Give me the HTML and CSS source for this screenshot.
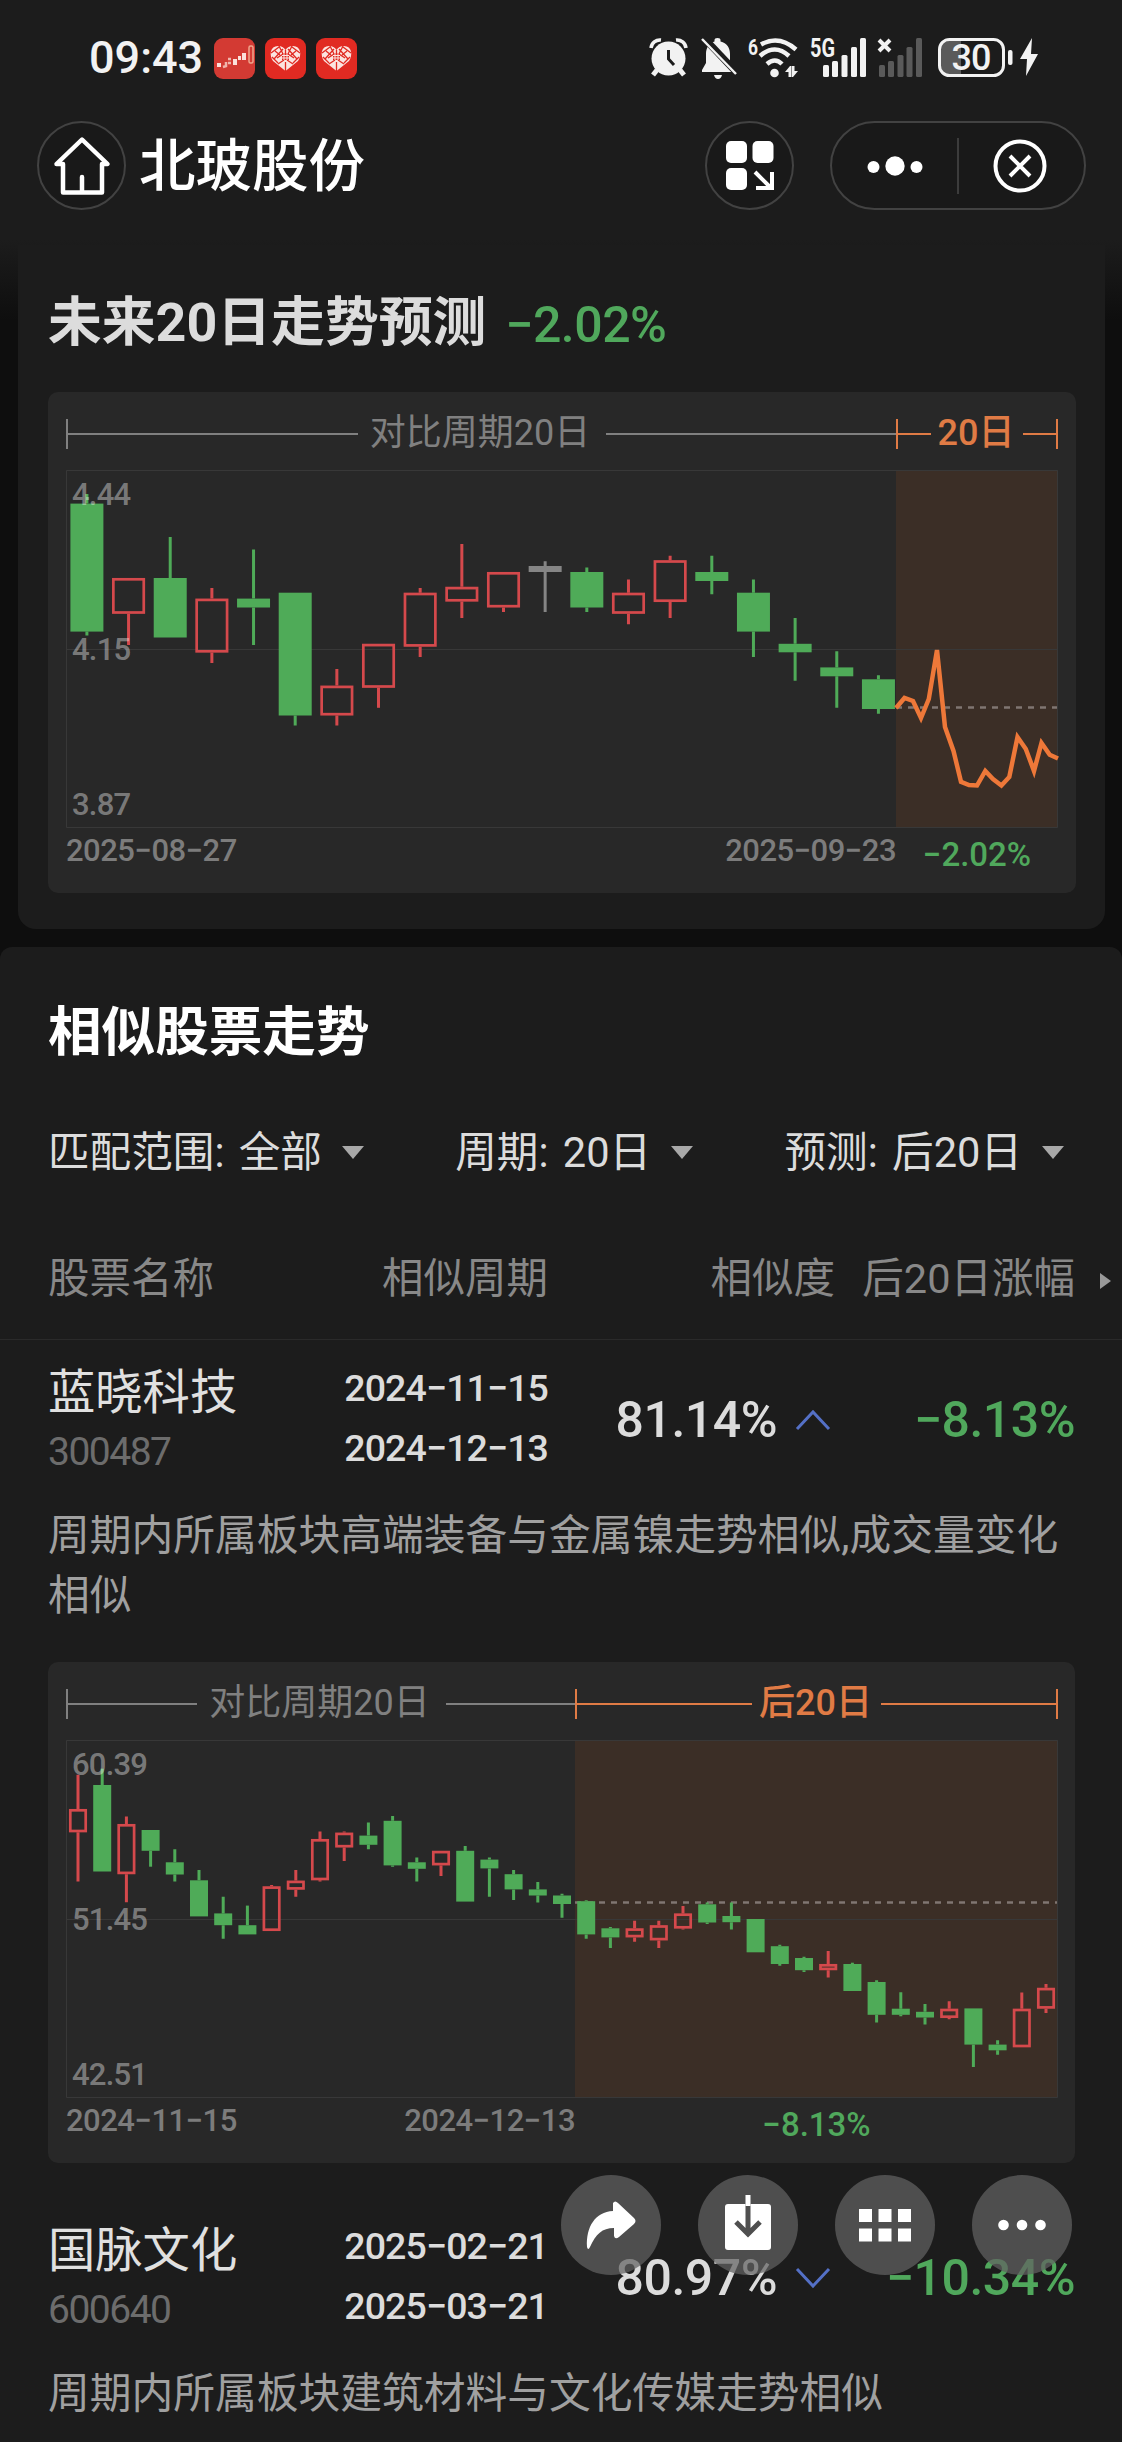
FILE: index.html
```html
<!DOCTYPE html>
<html lang="zh-CN">
<head>
    <meta charset="UTF-8">
    <meta name="viewport" content="width=device-width, initial-scale=1.0">
    <title>北玻股份</title>
    <link rel="stylesheet" href="styles.css">
</head>
<body>
    <div class="status-bar">
        <div class="status-left">
            <span class="time">09:43</span>
            <svg class="app-icon" viewBox="0 0 41 41">
                <rect width="41" height="41" rx="9" fill="#d33a33"/>
                <path d="M3 27h4M9 29l3-1v-4M14 21h3M14 25h3" stroke="#f0b5ac" stroke-width="2.500" fill="none"/>
                <path d="M3 25h4v4H3zM19 21h4v6h-4zM24 18h3v4h-3zM28 15h4v7h-4z" fill="#fbe0da"/>
                <rect x="35" y="8" width="4" height="17" rx="1.500" fill="none" stroke="#f0a58c" stroke-width="1.500"/>
            </svg>
            <svg class="app-icon" viewBox="0 0 41 41">
                <rect width="41" height="41" rx="9" fill="#e12a22"/>
                <path d="M20.500 33L8 23C4 17 5 8 13 8q5 0 7.500 4Q23 8 28 8c8 0 9 9 5 15z" fill="#fbe4e0"/>
                <path d="M6 15l8-6M9 21l9-10M7 19l6 6M14 8l4 8-6 4M20.500 12v5M35 15l-8-6M32 21l-9-10M34 19l-6 6M27 8l-4 8 6 4M13 26l6-4M28 26l-6-4M20.500 24v9M10 13l5 4M31 13l-5 4" stroke="#e12a22" stroke-width="1.300" fill="none"/>
                <rect x="17" y="15" width="7" height="7" fill="#e12a22"/>
                <path d="M19 15v7M22 15v7M17 17.500h7M17 20h7" stroke="#fbe4e0" stroke-width="1"/>
            </svg>
            <svg class="app-icon" viewBox="0 0 41 41">
                <rect width="41" height="41" rx="9" fill="#e12a22"/>
                <path d="M20.500 33L8 23C4 17 5 8 13 8q5 0 7.500 4Q23 8 28 8c8 0 9 9 5 15z" fill="#fbe4e0"/>
                <path d="M6 15l8-6M9 21l9-10M7 19l6 6M14 8l4 8-6 4M20.500 12v5M35 15l-8-6M32 21l-9-10M34 19l-6 6M27 8l-4 8 6 4M13 26l6-4M28 26l-6-4M20.500 24v9M10 13l5 4M31 13l-5 4" stroke="#e12a22" stroke-width="1.300" fill="none"/>
                <rect x="17" y="15" width="7" height="7" fill="#e12a22"/>
                <path d="M19 15v7M22 15v7M17 17.500h7M17 20h7" stroke="#fbe4e0" stroke-width="1"/>
            </svg>
        </div>
        <div class="status-right">
            <!-- alarm -->
            <svg width="37" height="40" viewBox="0 0 37 40">
                <path d="M1 10a9 9 0 0 1 10-8M36 10a9 9 0 0 0-10-8" stroke="#f2f2f2" stroke-width="3.500" fill="none"/>
                <path d="M7 32l-4 5M30 32l4 5" stroke="#f2f2f2" stroke-width="5"/>
                <circle cx="18.500" cy="20.500" r="17" fill="#f2f2f2"/>
                <path d="M18.500 12v9l5.500 6" stroke="#1c1c1c" stroke-width="3" fill="none"/>
            </svg>
            <!-- bell off -->
            <svg class="bell" width="36" height="42" viewBox="0 0 36 42">
                <path d="M13.500 4.500V3q0-2 3-2t3 2v1.500C26 6 29 11 29 17v9l4 7v2H1v-2l4-7v-9C5 11 8 6 13.500 4.500z" fill="#f2f2f2"/>
                <path d="M13 38h8q-1 4-4 4t-4-4z" fill="#f2f2f2"/>
                <path d="M2 0l35 37" stroke="#1c1c1c" stroke-width="7"/>
                <path d="M1 2l34 35" stroke="#f2f2f2" stroke-width="2.500"/>
            </svg>
            <!-- wifi -->
            <svg class="wifi" width="50" height="42" viewBox="0 0 50 42">
                <text x="0" y="18" class="status-text-small" textLength="10" lengthAdjust="spacingAndGlyphs">6</text>
                <path d="M13 7.500q18-10 35 5" stroke="#f2f2f2" stroke-width="4.500" fill="none"/>
                <path d="M12 19q15-13 29 0" stroke="#f2f2f2" stroke-width="4.500" fill="none"/>
                <path d="M19 27q8-7 15 0" stroke="#f2f2f2" stroke-width="4.500" fill="none"/>
                <circle cx="26.500" cy="36" r="4.300" fill="#f2f2f2"/>
                <path d="M37 35l5-6h1.500v11h-3v-5zM50 34l-5 6h-1v-11h2.500v5z" fill="#f2f2f2"/>
            </svg>
            <!-- 5G -->
            <svg width="56" height="42" viewBox="0 0 56 42">
                <text x="0" y="20" class="status-text" textLength="25" lengthAdjust="spacingAndGlyphs">5G</text>
                <g fill="#f2f2f2">
                    <rect x="13" y="28" width="6" height="12" rx="1.500"/>
                    <rect x="22" y="24" width="6" height="16" rx="1.500"/>
                    <rect x="31.500" y="18" width="6" height="22" rx="1.500"/>
                    <rect x="41" y="10" width="6" height="30" rx="1.500"/>
                    <rect x="50" y="1" width="6" height="39" rx="1.500"/>
                </g>
            </svg>
            <!-- second sim, no service -->
            <svg width="45" height="42" viewBox="0 0 45 42">
                <path d="M1 3l11 11M12 3L1 14" stroke="#f2f2f2" stroke-width="4"/>
                <g fill="#5a5a5a">
                    <rect x="1" y="28" width="6" height="12" rx="1.500"/>
                    <rect x="10" y="24" width="6" height="16" rx="1.500"/>
                    <rect x="19.500" y="18" width="6" height="22" rx="1.500"/>
                    <rect x="28.500" y="10" width="6" height="30" rx="1.500"/>
                    <rect x="38" y="1" width="6" height="39" rx="1.500"/>
                </g>
            </svg>
            <!-- battery -->
            <svg class="battery" width="75" height="42" viewBox="0 0 75 42">
                <path d="M11 4h12v33H11q-8 0-8-8V12q0-8 8-8z" fill="#5a5a5a"/>
                <rect x="1.500" y="2.500" width="64" height="36" rx="10" fill="none" stroke="#f2f2f2" stroke-width="3"/>
                <rect x="70" y="13" width="4.500" height="15" rx="2" fill="#f2f2f2"/>
                <text x="33" y="33" class="battery-text" text-anchor="middle">30</text>
            </svg>
            <svg width="18" height="42" viewBox="0 0 18 42">
                <path d="M12 1L0 22h7l-1 17L18 17h-7z" fill="#f2f2f2"/>
            </svg>
        </div>
    </div>

    <div class="nav-bar">
        <div class="round-btn">
            <svg width="56" height="60" viewBox="0 0 56 60" fill="none" stroke="#fff" stroke-width="4.500" stroke-linejoin="round" stroke-linecap="round">
                <path d="M8 28H2.500L28 3.500 53.500 28H48v28.500H9V28M28 56V41"/>
            </svg>
        </div>
        <h1>北玻股份</h1>
        <div class="round-btn grid-btn">
            <svg width="50" height="50" viewBox="0 0 50 50" fill="#fff">
                <rect x="1" y="0" width="21" height="22" rx="5"/>
                <rect x="27.500" y="0" width="21" height="22" rx="5"/>
                <rect x="1" y="27" width="21" height="22" rx="5"/>
                <path d="M30 31l16 16M47 31v16H31" fill="none" stroke="#fff" stroke-width="4"/>
            </svg>
        </div>
        <div class="capsule">
            <svg width="56" height="22" viewBox="0 0 56 22" fill="#fff">
                <circle cx="6.500" cy="12" r="6"/>
                <circle cx="28" cy="11" r="9.700"/>
                <circle cx="49.500" cy="12" r="6"/>
            </svg>
            <span class="capsule-line"></span>
            <svg width="54" height="54" viewBox="0 0 54 54" fill="none" stroke="#fff" stroke-width="4">
                <circle cx="27" cy="27" r="24.500"/>
                <path d="M17 17l20 20M37 17L17 37"/>
            </svg>
        </div>
    </div>

    <div class="forecast">
        <div class="forecast-card">
            <div class="forecast-title">
                <h2>未来20日走势预测</h2>
                <span class="percent down">−2.02%</span>
            </div>
            <div class="chart first" id="forecastChart">
                <div class="chart-head">
                    <div class="period"><i class="tick"></i><i class="rule"></i><span>对比周期20日</span><i class="rule"></i></div>
                    <div class="period after"><i class="tick"></i><i class="rule"></i><span>20日</span><i class="rule"></i><i class="tick"></i></div>
                </div>
                <svg class="plot" width="992" height="357" viewBox="0 0 992 357"></svg>
                <div class="chart-foot">
                    <div class="dates"><span>2025−08−27</span><span>2025−09−23</span></div>
                    <div class="result down">−2.02%</div>
                </div>
            </div>
        </div>
    </div>

    <div class="similar">
        <h2>相似股票走势</h2>
        <div class="filters">
            <div class="filter">匹配范围: 全部<i class="caret"></i></div>
            <div class="filter">周期: 20日<i class="caret"></i></div>
            <div class="filter">预测: 后20日<i class="caret"></i></div>
        </div>
        <div class="table-head">
            <span>股票名称</span>
            <span>相似周期</span>
            <span>相似度</span>
            <span>后20日涨幅</span>
            <i class="more-arrow"></i>
        </div>

        <div class="stock">
            <div class="stock-row">
                <div class="stock-name"><b>蓝晓科技</b><small>300487</small></div>
                <div class="stock-dates">2024−11−15<br>2024−12−13</div>
                <div class="match">
                    <span class="percent">81.14%</span>
                    <svg width="36" height="22" viewBox="0 0 36 22"><path d="M2 20L18 3l16 17" fill="none" stroke="#5470c6" stroke-width="3"/></svg>
                </div>
                <div class="percent down">−8.13%</div>
            </div>
            <p class="desc">周期内所属板块高端装备与金属镍走势相似,成交量变化相似</p>
            <div class="chart second" id="similarChart">
                <div class="chart-head">
                    <div class="period"><i class="tick"></i><i class="rule"></i><span>对比周期20日</span><i class="rule"></i></div>
                    <div class="period after"><i class="tick"></i><i class="rule"></i><span>后20日</span><i class="rule"></i><i class="tick"></i></div>
                </div>
                <svg class="plot" width="992" height="357" viewBox="0 0 992 357"></svg>
                <div class="chart-foot">
                    <div class="dates"><span>2024−11−15</span><span>2024−12−13</span></div>
                    <div class="result down">−8.13%</div>
                </div>
            </div>
        </div>

        <div class="stock">
            <div class="stock-row">
                <div class="stock-name"><b>国脉文化</b><small>600640</small></div>
                <div class="stock-dates">2025−02−21<br>2025−03−21</div>
                <div class="match">
                    <span class="percent">80.97%</span>
                    <svg width="36" height="22" viewBox="0 0 36 22"><path d="M2 2l16 17L34 2" fill="none" stroke="#5470c6" stroke-width="3"/></svg>
                </div>
                <div class="percent down">−10.34%</div>
            </div>
            <p class="desc">周期内所属板块建筑材料与文化传媒走势相似</p>
        </div>
    </div>

    <div class="float-actions">
        <div class="float-btn">
            <svg width="50" height="50" viewBox="0 0 50 50"><path d="M27 3q2-3 5 0l16 15q3 3 0 6L33 37q-4 3-5-1v-8C16 28 10 34 4 47q-2 4-3 0C0 27 9 12 27 11z" fill="#fff"/></svg>
        </div>
        <div class="float-btn">
            <svg class="save-icon" width="46" height="56" viewBox="0 0 46 56">
                <rect x="0" y="9" width="46" height="46" rx="3" fill="#fff"/>
                <path d="M23 9v30M11 27l12 12 12-12" fill="none" stroke="#4f4f4f" stroke-width="5"/>
                <rect x="20.500" y="0" width="5" height="11" fill="#fff"/>
            </svg>
        </div>
        <div class="float-btn">
            <svg width="52" height="33" viewBox="0 0 52 33" fill="#fff">
                <rect x="0" y="0" width="13" height="13"/><rect x="19.500" y="0" width="13" height="13"/><rect x="39" y="0" width="13" height="13"/>
                <rect x="0" y="19.500" width="13" height="13"/><rect x="19.500" y="19.500" width="13" height="13"/><rect x="39" y="19.500" width="13" height="13"/>
            </svg>
        </div>
        <div class="float-btn">
            <svg width="48" height="12" viewBox="0 0 48 12" fill="#fff"><circle cx="5.500" cy="6" r="5.300"/><circle cx="24" cy="6" r="5.300"/><circle cx="42.500" cy="6" r="5.300"/></svg>
        </div>
    </div>

    <script src="script.js"></script>
</body>
</html>
```
FILE: styles.css
```css
* {
    margin: 0;
    padding: 0;
    box-sizing: border-box;
}

body {
    width: 1122px;
    height: 2442px;
    overflow: hidden;
    background-color: #0e0e0e;
    color: #dcdcdc;
    font-family: Roboto, 'Noto Sans CJK SC', sans-serif;
}

svg {
    display: block;
    flex-shrink: 0;
    overflow: visible;
}

i {
    display: block;
    flex-shrink: 0;
}

.down {
    color: #50a85c;
}

/* status bar */
.status-bar {
    height: 116px;
    padding: 0 84px 0 89px;
    display: flex;
    align-items: center;
    justify-content: space-between;
    background-color: #1c1c1c;
}

.status-left {
    display: flex;
    align-items: center;
    gap: 10px;
}

.time {
    width: 115px;
    font-size: 45px;
    font-weight: 500;
    line-height: 50px;
    color: #f2f2f2;
}

.app-icon {
    width: 41px;
    height: 41px;
}

.status-right {
    display: flex;
    align-items: center;
    gap: 12px;
}

.bell {
    margin-left: 2px;
}

.wifi {
    margin-left: -1px;
}

.battery {
    margin-left: 3px;
    margin-right: -5px;
}

.status-text {
    font-size: 26px;
    font-weight: 700;
    fill: #f2f2f2;
}

.status-text-small {
    font-size: 22px;
    font-weight: 700;
    fill: #f2f2f2;
}

.battery-text {
    font-size: 36px;
    font-weight: 500;
    letter-spacing: -1px;
    fill: #f2f2f2;
}

/* nav */
.nav-bar {
    height: 99px;
    padding: 0 36px 0 37px;
    display: flex;
    align-items: center;
    background-color: #1c1c1c;
}

.round-btn {
    width: 89px;
    height: 89px;
    border: 2px solid #424242;
    border-radius: 50%;
    background-color: #191919;
    display: flex;
    align-items: center;
    justify-content: center;
}

.nav-bar h1 {
    margin-left: 13px;
    padding-top: 3px;
    font-size: 56.500px;
    font-weight: 500;
    line-height: 80px;
    color: #fff;
}

.grid-btn {
    margin-left: auto;
}

.capsule {
    width: 256px;
    height: 89px;
    margin-left: 36px;
    padding: 0 37px 0 35px;
    border: 2px solid #424242;
    border-radius: 45px;
    background-color: #191919;
    display: flex;
    align-items: center;
    justify-content: space-between;
}

.capsule-line {
    width: 2px;
    height: 56px;
    background-color: #3c3c3c;
}

/* forecast */
.forecast {
    padding: 30px 17px 18px 18px;
    background: linear-gradient(#1c1c1c 25px, #0e0e0e 105px);
}

.forecast-card {
    padding: 36px 29px 36px 30px;
    background-color: #1c1c1c;
    border-radius: 0 0 18px 18px;
}

.forecast-title {
    height: 80px;
    margin-bottom: 31px;
    display: flex;
    align-items: center;
}

.forecast-title h2 {
    padding-top: 4px;
    font-size: 53.800px;
    font-weight: 700;
    line-height: 76px;
}

.forecast-title .percent {
    margin-left: 19px;
    padding-top: 7px;
}

.percent {
    font-size: 50px;
    font-weight: 500;
    line-height: 60px;
    letter-spacing: -0.5px;
}

/* chart card */
.chart {
    height: 501px;
    padding: 0 17px 0 18px;
    border-radius: 10px;
    background-color: #282828;
}

.chart-head,
.chart-foot {
    display: grid;
}

.first .chart-head,
.first .chart-foot {
    grid-template-columns: 830px 162px;
}

.second .chart-head,
.second .chart-foot {
    grid-template-columns: 509px 483px;
}

.chart-head {
    height: 78px;
    padding-top: 5px;
}

.period {
    display: flex;
    align-items: center;
    font-size: 36px;
    line-height: 50px;
    color: #808080;
}

.period span {
    padding: 0 16px 2px 12px;
}

.tick {
    width: 2px;
    height: 30px;
    background-color: currentColor;
}

.rule {
    flex: 1;
    height: 2px;
    background-color: currentColor;
}

.after {
    color: #e07b45;
    font-weight: 500;
}

.after span {
    padding: 0 9px 2px 7px;
}

.axis-label {
    font-size: 31px;
    font-weight: 500;
    letter-spacing: -0.8px;
    fill: rgba(255, 255, 255, 0.4);
}

.grid-line {
    stroke: #383838;
    stroke-width: 1;
    fill: none;
}

.base-line {
    stroke: #807672;
    stroke-width: 2.5;
    stroke-dasharray: 6 6;
}

.dates {
    display: flex;
    justify-content: space-between;
    padding-top: 4px;
    font-size: 31px;
    font-weight: 500;
    line-height: 40px;
    letter-spacing: -0.5px;
    color: #7c7c7c;
}

.result {
    padding-top: 7px;
    text-align: center;
    font-size: 33px;
    font-weight: 500;
    line-height: 42px;
}

/* similar stocks */
.similar {
    height: 1495px;
    padding: 53px 47px 0 48px;
    background-color: #1c1c1c;
    border-radius: 12px 12px 0 0;
    overflow: hidden;
}

.similar h2 {
    padding-top: 3px;
    font-size: 53.600px;
    font-weight: 700;
    line-height: 60px;
    color: #fff;
}

.filters {
    margin-top: 60px;
    padding-right: 11px;
    display: flex;
    justify-content: space-between;
}

.filter {
    display: flex;
    align-items: center;
    font-size: 41.600px;
    line-height: 60px;
    word-spacing: 4px;
}

.caret {
    margin-left: 20px;
    margin-bottom: 2px;
    border: 11px solid transparent;
    border-top: 13px solid #a8a8a8;
    border-bottom: 0;
}

.table-head {
    position: relative;
    height: 91px;
    margin: 66px -47px 0 -48px;
    padding-left: 48px;
    display: grid;
    grid-template-columns: 250px 250px 287px 240px;
    font-size: 41.500px;
    line-height: 60px;
    color: #888;
    border-bottom: 1px solid #2a2a2a;
}

.table-head span + span {
    text-align: right;
}

.more-arrow {
    position: absolute;
    right: 11px;
    top: 24px;
    border: 8.500px solid transparent;
    border-left: 11px solid #999;
    border-right: 0;
}

.stock {
    height: 858px;
}

.stock:last-child {
    height: auto;
}

.stock-row {
    height: 160px;
    display: grid;
    grid-template-columns: 250px 250px 287px 240px;
    align-items: center;
}

.stock-name b {
    display: block;
    padding-top: 1px;
    font-size: 47.300px;
    font-weight: 400;
    line-height: 62px;
    color: #e0e0e0;
}

.stock-name small {
    display: block;
    font-size: 39px;
    font-weight: 400;
    line-height: 56px;
    letter-spacing: -1.500px;
    color: #6c6c6c;
}

.stock-dates {
    text-align: right;
    font-size: 37.500px;
    font-weight: 500;
    line-height: 60px;
    letter-spacing: -0.900px;
    padding-bottom: 5px;
}

.match {
    display: flex;
    align-items: center;
    justify-content: flex-end;
    gap: 18px;
    padding-right: 4px;
}

.stock-row > .percent {
    text-align: right;
}

.desc {
    padding-top: 2px;
    margin-top: 4px;
    margin-bottom: 36px;
    font-size: 41.750px;
    line-height: 60px;
    color: #a0a0a0;
}

/* floating actions */
.float-actions {
    position: absolute;
    left: 561px;
    top: 2175px;
    display: flex;
    gap: 37px;
}

.float-btn {
    width: 100px;
    height: 100px;
    border-radius: 50%;
    background-color: rgba(98, 98, 98, 0.725);
    display: flex;
    align-items: center;
    justify-content: center;
}

.save-icon {
    margin-bottom: 4px;
}
```
FILE: script.js
```js
const COLORS = { G: '#4fab58', R: '#d5494c', X: '#858585' };

// [type, high, bodyTop, bodyBottom, low]
const forecastCandles = [
    ['G', 24, 33.6, 161.6, 165.6], ['R', 108, 108, 143.8, 175], ['G', 67, 108, 167.5, 167.5],
    ['R', 118, 128.6, 182.6, 193], ['G', 79.4, 128.6, 137.5, 175], ['G', 122.7, 122.7, 245.5, 255.5],
    ['R', 199, 215.6, 245.5, 255.5], ['R', 173.8, 173.8, 217.8, 237.8], ['R', 118, 122.7, 176.7, 187],
    ['R', 74, 116.8, 131.6, 148], ['R', 102, 102, 137.5, 142], ['X', 91.3, 96, 102, 142],
    ['G', 97.6, 102, 137.5, 142], ['R', 109.4, 122.7, 143.8, 154.2], ['R', 85.7, 90.2, 132, 148],
    ['G', 85.7, 102, 111, 124.2], ['G', 109.4, 122.7, 161.6, 187], ['G', 148, 173.8, 182.3, 210.8],
    ['G', 181.2, 197.4, 206.3, 237.8], ['G', 205.2, 209.3, 239, 243.7]
];

const forecastLine = [
    [830, 238], [838.5, 228], [847, 231], [855, 248], [862.8, 229], [871, 180], [879, 257],
    [887.5, 281], [895, 311.8], [903, 315], [911, 315.5], [919.3, 301], [927, 309], [935.4, 315.5],
    [943.3, 307], [951.5, 267], [959.8, 279], [968, 301], [975.5, 273], [983.7, 284.8], [992, 288.5]
];

const similarCandles = [
    ['R', 34.8, 69, 92.3, 141.6], ['G', 28.7, 45, 131.5, 131.5], ['R', 76.4, 84, 134.2, 162.2],
    ['G', 90, 90, 110.8, 126.7], ['G', 109.2, 122.3, 134.5, 141.6], ['G', 130, 140.3, 176.4, 176.4],
    ['G', 156.8, 173.4, 185.2, 198.7], ['G', 165.6, 185.2, 194.4, 194.4], ['R', 145, 146.3, 191, 191],
    ['R', 130, 140.6, 149.7, 156.8], ['R', 91.6, 99, 140.3, 141.6], ['R', 91.6, 92.6, 107.5, 121],
    ['G', 82.5, 95.6, 104.8, 109.2], ['G', 76, 80.8, 125.4, 126.7], ['G', 117.6, 122.3, 128.8, 141.6],
    ['R', 110.8, 110.8, 125.4, 136], ['G', 106, 110.8, 161.6, 161.6], ['G', 117.6, 119.6, 128.4, 156.8],
    ['G', 130, 134.2, 149.4, 160], ['G', 142, 149.4, 155.5, 162.6], ['G', 153.8, 155.5, 164, 177.8],
    ['G', 160.2, 161.2, 194.4, 198.7], ['G', 187, 188.3, 197.4, 208], ['R', 180.8, 188.3, 197.4, 201.8],
    ['R', 180.8, 185.2, 200.4, 208], ['R', 166, 173.4, 188.6, 189.6], ['G', 162.6, 164.3, 182.5, 184],
    ['G', 162.6, 176, 182.2, 189.6], ['G', 179, 179, 212.3, 212.3], ['G', 204.8, 206.2, 224, 225.8],
    ['G', 216.7, 218, 230.2, 232], ['R', 211, 224, 230.2, 237.6], ['G', 222.7, 224, 251, 251],
    ['G', 240.3, 242, 274.8, 282.6], ['G', 252.2, 268.7, 274.8, 276.2], ['G', 264, 271.8, 277.5, 284.6],
    ['R', 261.3, 268.7, 278, 279.2], ['G', 268.4, 268.4, 304.6, 327], ['G', 300.2, 304.6, 310.3, 314.7],
    ['R', 252.5, 268.7, 307.3, 307.3], ['R', 244, 247.8, 268.7, 273]
];

function drawCandle(candle, x, width) {
    const [type, high, top, bottom, low] = candle;
    const color = COLORS[type];
    let out = `<path d="M${x} ${high}V${top}M${x} ${bottom}V${low}" stroke="${color}" stroke-width="3"/>`;
    if (type === 'R') {
        out += `<rect x="${x - width / 2 + 1.3}" y="${top + 1.3}" width="${width - 2.6}" height="${bottom - top - 2.6}" fill="none" stroke="${color}" stroke-width="2.7"/>`;
    } else {
        out += `<rect x="${x - width / 2}" y="${top}" width="${width}" height="${bottom - top}" fill="${color}"/>`;
    }
    return out;
}

function drawChart(id, options) {
    const plot = document.querySelector(`#${id} .plot`);
    let out = `<rect x="${options.split}" y="0" width="${992 - options.split}" height="357" fill="#3b2e26"/>`;
    out += '<path class="grid-line" d="M0.5 0.5H991.5V357.5H0.5zM0 179.5H992"/>';
    out += `<line class="base-line" x1="${options.split}" x2="991" y1="${options.base}" y2="${options.base}"/>`;
    options.candles.forEach((candle, i) => {
        out += drawCandle(candle, options.start + options.step * i, options.width);
    });
    if (options.line) {
        out += `<polyline points="${options.line.join(' ')}" fill="none" stroke="#ee7839" stroke-width="4.5"/>`;
    }
    options.labels.forEach((label, i) => {
        out += `<text class="axis-label" x="6" y="${34.7 + 155 * i}">${label}</text>`;
    });
    plot.innerHTML = out;
}

drawChart('forecastChart', {
    split: 830, base: 237.5, start: 20.9, step: 41.66, width: 33,
    candles: forecastCandles, line: forecastLine, labels: ['4.44', '4.15', '3.87']
});

drawChart('similarChart', {
    split: 509, base: 162.5, start: 12, step: 24.2, width: 18,
    candles: similarCandles, labels: ['60.39', '51.45', '42.51']
});
```
